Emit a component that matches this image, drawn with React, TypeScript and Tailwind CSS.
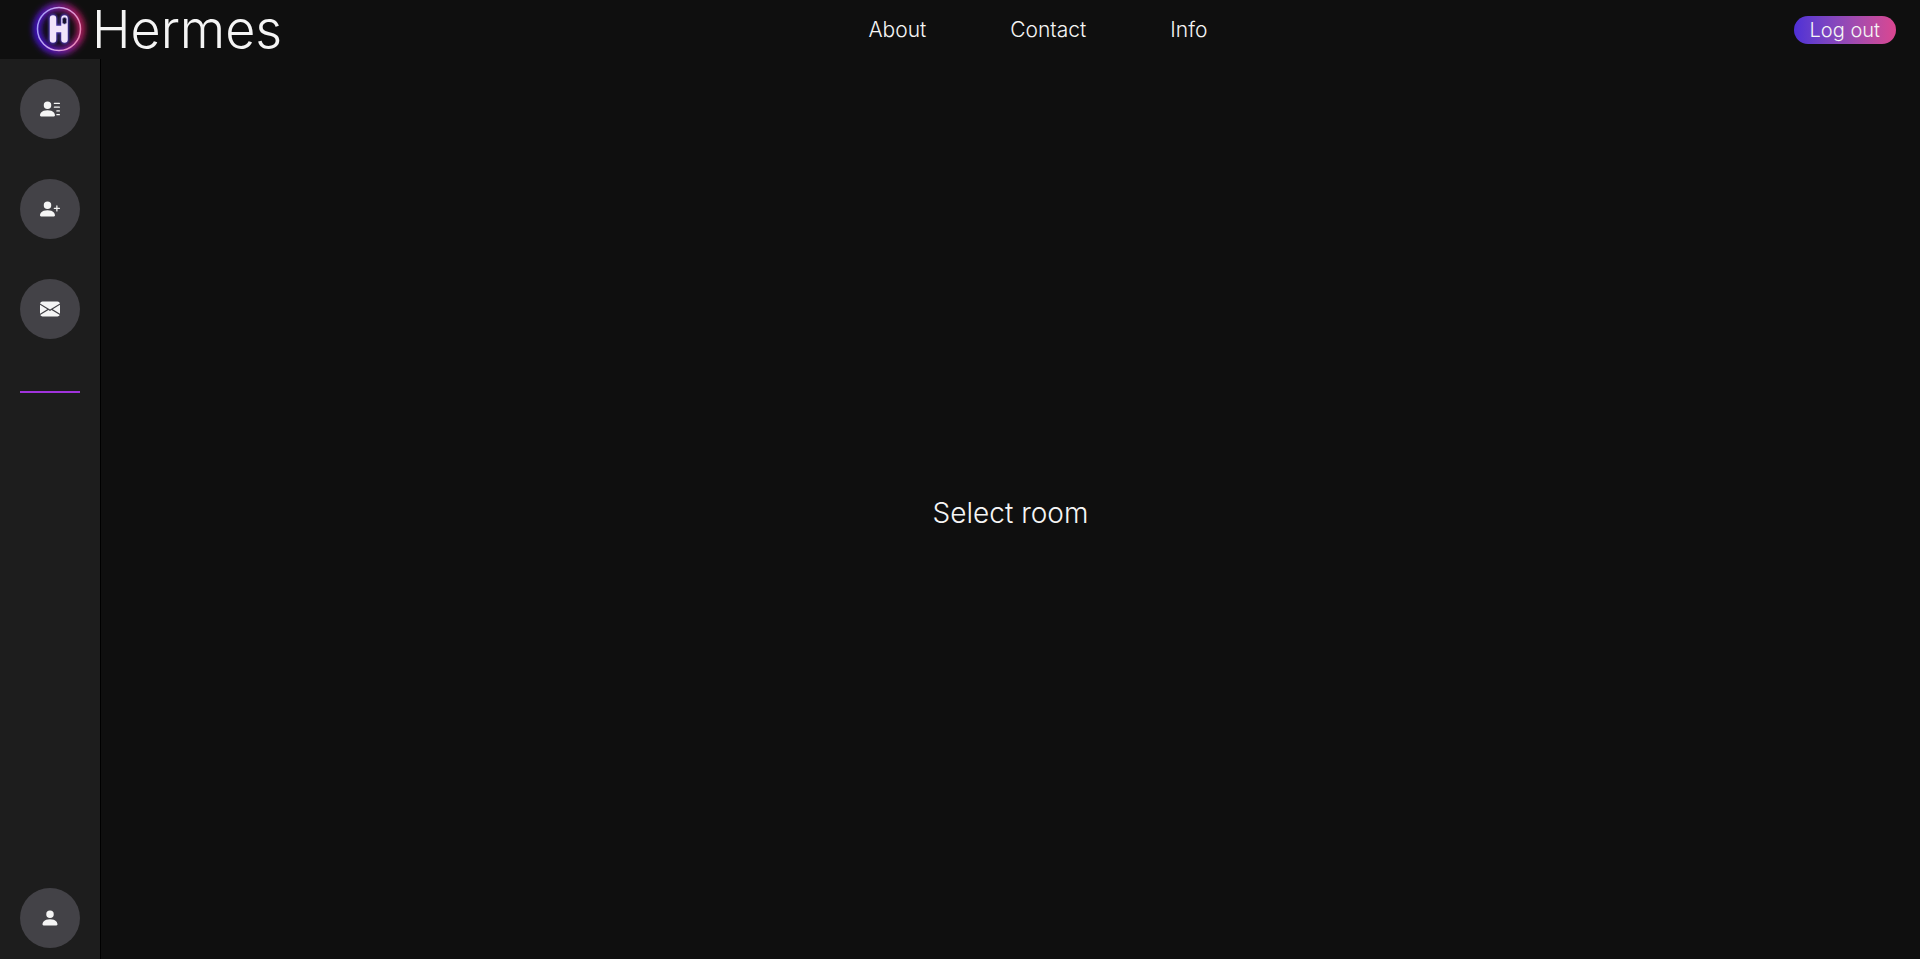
import { BsEnvelopeFill, BsPersonFill, BsPersonLinesFill, BsPersonPlusFill } from "react-icons/bs";
import type { IconType } from "react-icons";

const links = ["About", "Contact", "Info"];

const actions: { label: string; icon: IconType }[] = [
  { label: "Friends", icon: BsPersonLinesFill },
  { label: "Add friend", icon: BsPersonPlusFill },
  { label: "Messages", icon: BsEnvelopeFill },
];

function Logo() {
  return (
    <svg viewBox="0 0 60 59" className="h-[59px] w-[60px] shrink-0 overflow-visible" aria-hidden="true">
      <defs>
        <linearGradient id="ring" x1="0" x2="1" y1="0.35" y2="0.6">
          <stop offset="0" stopColor="#a29cf6" />
          <stop offset="0.5" stopColor="#d6a8ec" />
          <stop offset="1" stopColor="#ea86b4" />
        </linearGradient>
        <linearGradient id="glow" x1="0" x2="1" y1="0.6" y2="0.4">
          <stop offset="0" stopColor="#4a12e8" />
          <stop offset="0.5" stopColor="#7d1fb8" />
          <stop offset="1" stopColor="#c81a62" />
        </linearGradient>
        <filter id="wide" x="-40%" y="-40%" width="180%" height="180%">
          <feGaussianBlur stdDeviation="3" />
        </filter>
        <filter id="soft" x="-60%" y="-40%" width="220%" height="180%">
          <feGaussianBlur stdDeviation="1.3" />
        </filter>
      </defs>
      <circle cx="30" cy="29" r="22" fill="none" stroke="url(#glow)" strokeWidth="7" filter="url(#wide)" />
      <circle cx="30" cy="29" r="21.500" fill="none" stroke="url(#ring)" strokeWidth="1.500" />
      <path
        d="M24 18.500V39.500M35.500 18.500V39.500M24 29H35.500"
        fill="none"
        stroke="#4a36b0"
        strokeWidth="9"
        strokeLinecap="round"
        filter="url(#soft)"
      />
      <path
        d="M24 18.500V39.500M35.500 18.500V39.500M24 29H35.500"
        fill="none"
        stroke="#f0e4fb"
        strokeWidth="6.500"
        strokeLinecap="round"
      />
      <rect x="33.500" y="17.500" width="4" height="6.500" rx="1.800" fill="#17132e" stroke="#8878bd" strokeWidth="0.700" />
    </svg>
  );
}

function RoundButton({ label, icon: Icon }: { label: string; icon: IconType }) {
  return (
    <button
      type="button"
      aria-label={label}
      className="flex size-[60px] items-center justify-center rounded-full bg-[#434247] text-[#f5f5f5]"
    >
      <Icon size={20} />
    </button>
  );
}

export default function App() {
  return (
    <div className="flex h-screen flex-col bg-[#0f0f0f] font-['Inter','Liberation_Sans',sans-serif] text-[#f5f5f5]">
      <header className="flex h-[59px] shrink-0 items-center justify-between pr-6 pl-[29px]">
        <a href="#" className="flex items-center gap-[3px] text-[52px] leading-none font-light">
          <Logo />
          Hermes
        </a>
        <nav className="flex gap-[84px] text-[21px] font-light">
          {links.map((link) => (
            <a key={link} href="#">
              {link}
            </a>
          ))}
        </nav>
        <button
          type="button"
          className="flex h-7 items-center rounded-full bg-linear-to-r from-[#4f2fd6] to-[#db4590] px-4 text-xl font-light"
        >
          Log out
        </button>
      </header>
      <div className="flex min-h-0 flex-1">
        <aside className="flex w-[101px] shrink-0 flex-col items-center justify-between border-r border-black bg-[#1d1d1d] pt-5 pb-[11px]">
          <div className="flex flex-col gap-10">
            {actions.map((action) => (
              <RoundButton key={action.label} {...action} />
            ))}
            <hr className="mt-3 w-full border-t-2 border-[#a033dc]" />
          </div>
          <RoundButton label="Profile" icon={BsPersonFill} />
        </aside>
        <main className="flex flex-1 items-center justify-center pt-2">
          <h1 className="text-[28px] font-light">Select room</h1>
        </main>
      </div>
    </div>
  );
}
